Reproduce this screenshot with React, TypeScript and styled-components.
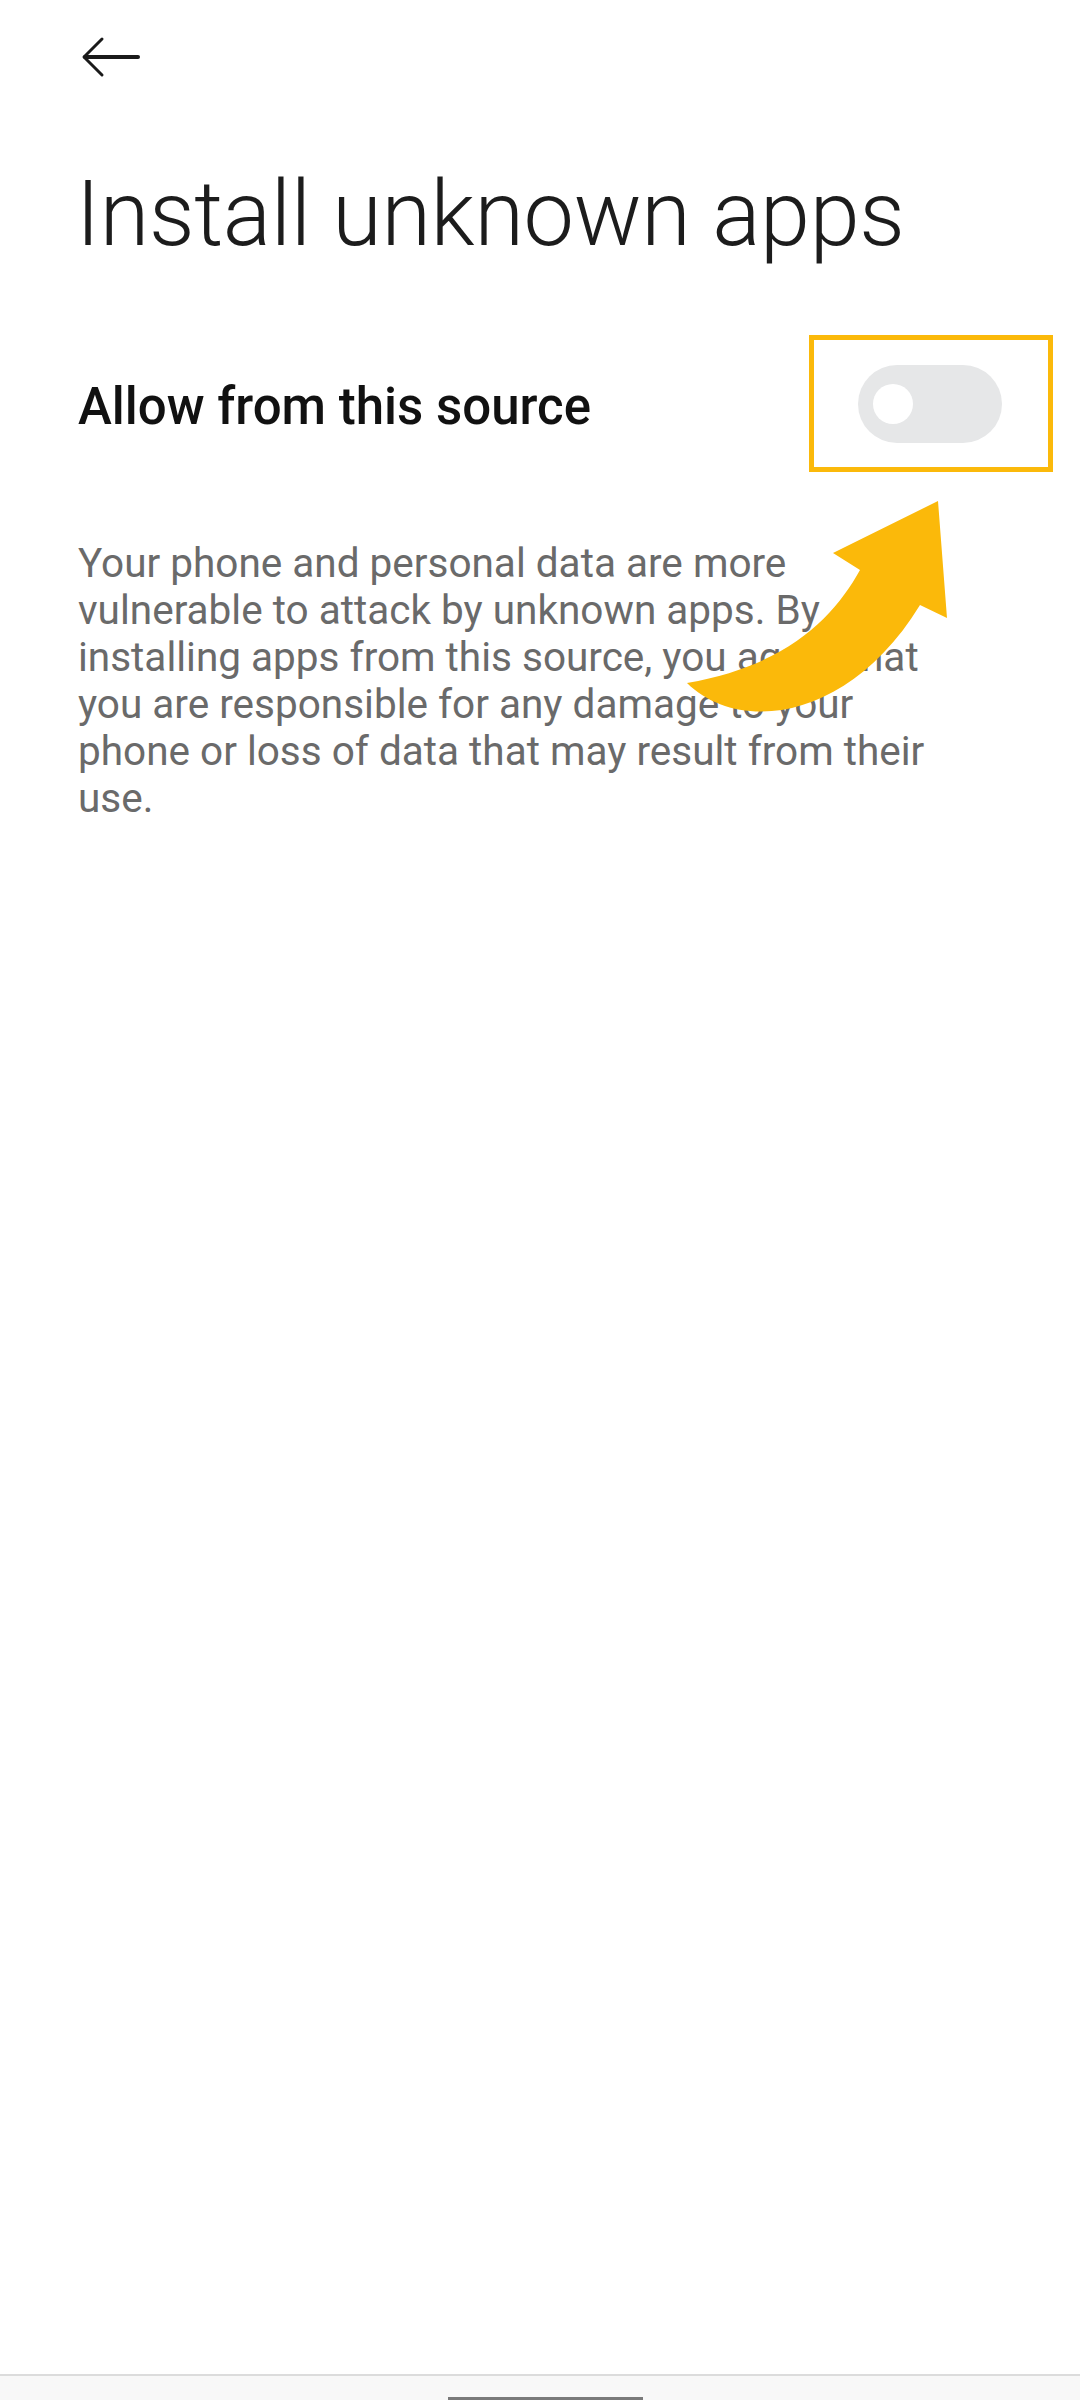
import React from "react";
import styled, { createGlobalStyle } from "styled-components";

const GlobalStyle = createGlobalStyle`
  html, body {
    margin: 0;
    padding: 0;
    background: #ffffff;
  }
  body {
    font-family: Roboto, "Noto Sans", "Liberation Sans", sans-serif;
    -webkit-font-smoothing: antialiased;
  }
`;

const Screen = styled.div`
  width: 1080px;
  height: 2400px;
  position: relative;
  display: flex;
  flex-direction: column;
  background: #ffffff;
  overflow: hidden;
`;

const TopBar = styled.div`
  height: 114px;
  display: flex;
  align-items: center;
  padding-left: 80px;
`;

const BackButton = styled.button`
  border: none;
  background: none;
  padding: 0;
  width: 60px;
  height: 42px;
  display: flex;
  cursor: pointer;
`;

const Title = styled.h1`
  margin: 56px 0 0 76px;
  font-size: 90px;
  line-height: 90px;
  font-weight: 300;
  color: #1c1c1c;
  letter-spacing: -0.3px;
`;

const SettingRow = styled.div`
  margin-top: 92px;
  height: 104px;
  display: flex;
  align-items: center;
  justify-content: space-between;
  padding: 0 78px;
`;

const Label = styled.span`
  font-size: 51px;
  line-height: 58px;
  font-weight: 500;
  color: #111111;
  padding-top: 6px;
`;

const ToggleWrap = styled.div`
  position: relative;
`;

const Toggle = styled.div<{ $on?: boolean }>`
  width: 144px;
  height: 78px;
  border-radius: 39px;
  background: ${(p) => (p.$on ? "#0d84ff" : "#e6e7e8")};
  display: flex;
  align-items: center;
  padding: 0 15px;
  box-sizing: border-box;
  justify-content: ${(p) => (p.$on ? "flex-end" : "flex-start")};
`;

const Knob = styled.span`
  width: 40px;
  height: 40px;
  border-radius: 50%;
  background: #ffffff;
`;

const Highlight = styled.div`
  position: absolute;
  left: -49px;
  right: -51px;
  top: -30px;
  bottom: -29px;
  border: 5px solid #fbb90a;
  pointer-events: none;
`;

const Description = styled.p`
  margin: 84px 0 0 78px;
  width: 940px;
  font-size: 40.5px;
  line-height: 47px;
  color: #6a6a6a;
`;

const Pointer = styled.svg`
  position: absolute;
  left: 680px;
  top: 490px;
  width: 280px;
  height: 250px;
`;

const Spacer = styled.div`
  flex: 1;
`;

const NavBar = styled.div`
  height: 24px;
  border-top: 2px solid #dcdcdc;
  background: #f8f8f8;
  display: flex;
  justify-content: center;
  align-items: flex-end;
`;

const HomeIndicator = styled.span`
  width: 195px;
  height: 3px;
  background: #7a7a7a;
  margin-left: 10px;
`;

const App: React.FC = () => {
  return (
    <>
      <GlobalStyle />
      <Screen>
        <TopBar>
          <BackButton aria-label="Back">
            <svg width="60" height="42" viewBox="0 0 60 42" fill="none">
              <path d="M58 21H5" stroke="#1a1a1a" strokeWidth="4" strokeLinecap="round" />
              <path d="M22 3L4 21l18 18" stroke="#1a1a1a" strokeWidth="3" strokeLinecap="round" strokeLinejoin="round" />
            </svg>
          </BackButton>
        </TopBar>

        <Title>Install unknown apps</Title>

        <SettingRow>
          <Label>Allow from this source</Label>
          <ToggleWrap>
            <Toggle>
              <Knob />
            </Toggle>
            <Highlight />
          </ToggleWrap>
        </SettingRow>

        <Description>
          Your phone and personal data are more
          <br />
          vulnerable to attack by unknown apps. By
          <br />
          installing apps from this source, you agree that
          <br />
          you are responsible for any damage to your
          <br />
          phone or loss of data that may result from their
          <br />
          use.
        </Description>

        <Spacer />
        <NavBar>
          <HomeIndicator />
        </NavBar>

        <Pointer viewBox="680 490 280 250">
          <path
            d="M938 501 L833 553 L860 570 C835 615 790 665 687 683 C740 735 850 720 920 605 L947 618 Z"
            fill="#fbb90a"
          />
        </Pointer>
      </Screen>
    </>
  );
};

export default App;
